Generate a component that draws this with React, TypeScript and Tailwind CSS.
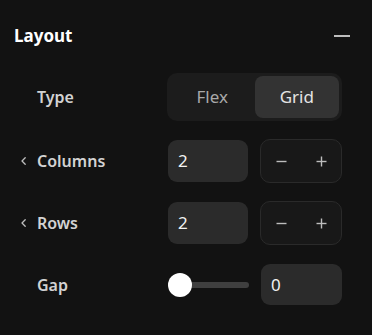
import React, { useState } from 'react';

const font = { fontFamily: '"Noto Sans", "Open Sans", sans-serif' };

const MinusIcon = ({ size = 11 }: { size?: number }) => (
  <svg width={size} height={size} viewBox="0 0 11 11" fill="none">
    <line x1="0.5" y1="5.5" x2="10.5" y2="5.5" stroke="#bdbdbd" strokeWidth="1.4" />
  </svg>
);

const PlusIcon = () => (
  <svg width={11} height={11} viewBox="0 0 11 11" fill="none">
    <line x1="0.5" y1="5.5" x2="10.5" y2="5.5" stroke="#bdbdbd" strokeWidth="1.4" />
    <line x1="5.5" y1="0.5" x2="5.5" y2="10.5" stroke="#bdbdbd" strokeWidth="1.4" />
  </svg>
);

const Chevron = () => (
  <svg width={5} height={8} viewBox="0 0 5 8" fill="none">
    <path d="M4.2 0.8 L1 4 L4.2 7.2" stroke="#bdbdbd" strokeWidth="1.3" strokeLinecap="round" strokeLinejoin="round" />
  </svg>
);

const Label = ({ text, chevron }: { text: string; chevron?: boolean }) => (
  <div className="flex w-[153px] items-center pl-[7px]">
    <div className="flex w-[16px] items-center">{chevron && <Chevron />}</div>
    <span className="text-[16px] font-semibold text-[#d2d2d2]">{text}</span>
  </div>
);

const NumberBox = ({ value, wide }: { value: number; wide?: boolean }) => (
  <div
    className={`flex items-center rounded-[9px] bg-[#2b2b2b] pl-[10px] text-[17px] text-[#f2f2f2] ${
      wide ? 'h-[41px] w-[81px]' : 'h-[42px] w-[80px]'
    }`}
  >
    {value}
  </div>
);

const Stepper = ({ onDec, onInc }: { onDec: () => void; onInc: () => void }) => (
  <div className="grid h-[44px] w-[82px] grid-cols-2 rounded-[10px] border border-[#2a2a2a] bg-[#181818]">
    <button onClick={onDec} className="flex items-center justify-center">
      <MinusIcon />
    </button>
    <button onClick={onInc} className="flex items-center justify-center">
      <PlusIcon />
    </button>
  </div>
);

export default function App() {
  const [type, setType] = useState<'flex' | 'grid'>('grid');
  const [columns, setColumns] = useState(2);
  const [rows, setRows] = useState(2);
  const [gap] = useState(0);

  return (
    <div className="h-[335px] w-[372px] bg-[#121212] px-[14px] pt-[24px]" style={font}>
      {/* Header */}
      <div className="flex h-[24px] items-center justify-between">
        <span className="text-[17px] font-bold text-white">Layout</span>
        <div className="mr-[8px] h-[2px] w-[16px] bg-[#bdbdbd]" />
      </div>

      <div className="mt-[25px] flex flex-col gap-[18px]">
        {/* Type */}
        <div className="flex items-center">
          <Label text="Type" />
          <div className="grid h-[48px] w-[175px] grid-cols-2 rounded-[10px] bg-[#1c1c1c] p-[3px]">
            <button
              onClick={() => setType('flex')}
              className={`rounded-[8px] text-[17px] ${type === 'flex' ? 'bg-[#333333] text-[#e4e4e4]' : 'text-[#a9a9a9]'}`}
            >
              Flex
            </button>
            <button
              onClick={() => setType('grid')}
              className={`rounded-[8px] text-[17px] ${type === 'grid' ? 'bg-[#333333] text-[#e4e4e4]' : 'text-[#a9a9a9]'}`}
            >
              Grid
            </button>
          </div>
        </div>

        {/* Columns */}
        <div className="flex items-center">
          <Label text="Columns" chevron />
          <div className="ml-[1px] flex items-center gap-[12px]">
            <NumberBox value={columns} />
            <Stepper onDec={() => setColumns(c => Math.max(1, c - 1))} onInc={() => setColumns(c => c + 1)} />
          </div>
        </div>

        {/* Rows */}
        <div className="flex items-center">
          <Label text="Rows" chevron />
          <div className="ml-[1px] flex items-center gap-[12px]">
            <NumberBox value={rows} />
            <Stepper onDec={() => setRows(r => Math.max(1, r - 1))} onInc={() => setRows(r => r + 1)} />
          </div>
        </div>

        {/* Gap */}
        <div className="flex h-[43px] items-center">
          <Label text="Gap" />
          <div className="ml-[1px] flex items-center gap-[12px]">
            <div className="relative flex h-[24px] w-[81px] items-center">
              <div className="ml-[12px] h-[6px] w-[69px] rounded-full bg-[#3f3f3f]" />
              <div className="absolute left-0 top-0 h-[24px] w-[24px] rounded-full bg-white" />
            </div>
            <NumberBox value={gap} wide />
          </div>
        </div>
      </div>
    </div>
  );
}
